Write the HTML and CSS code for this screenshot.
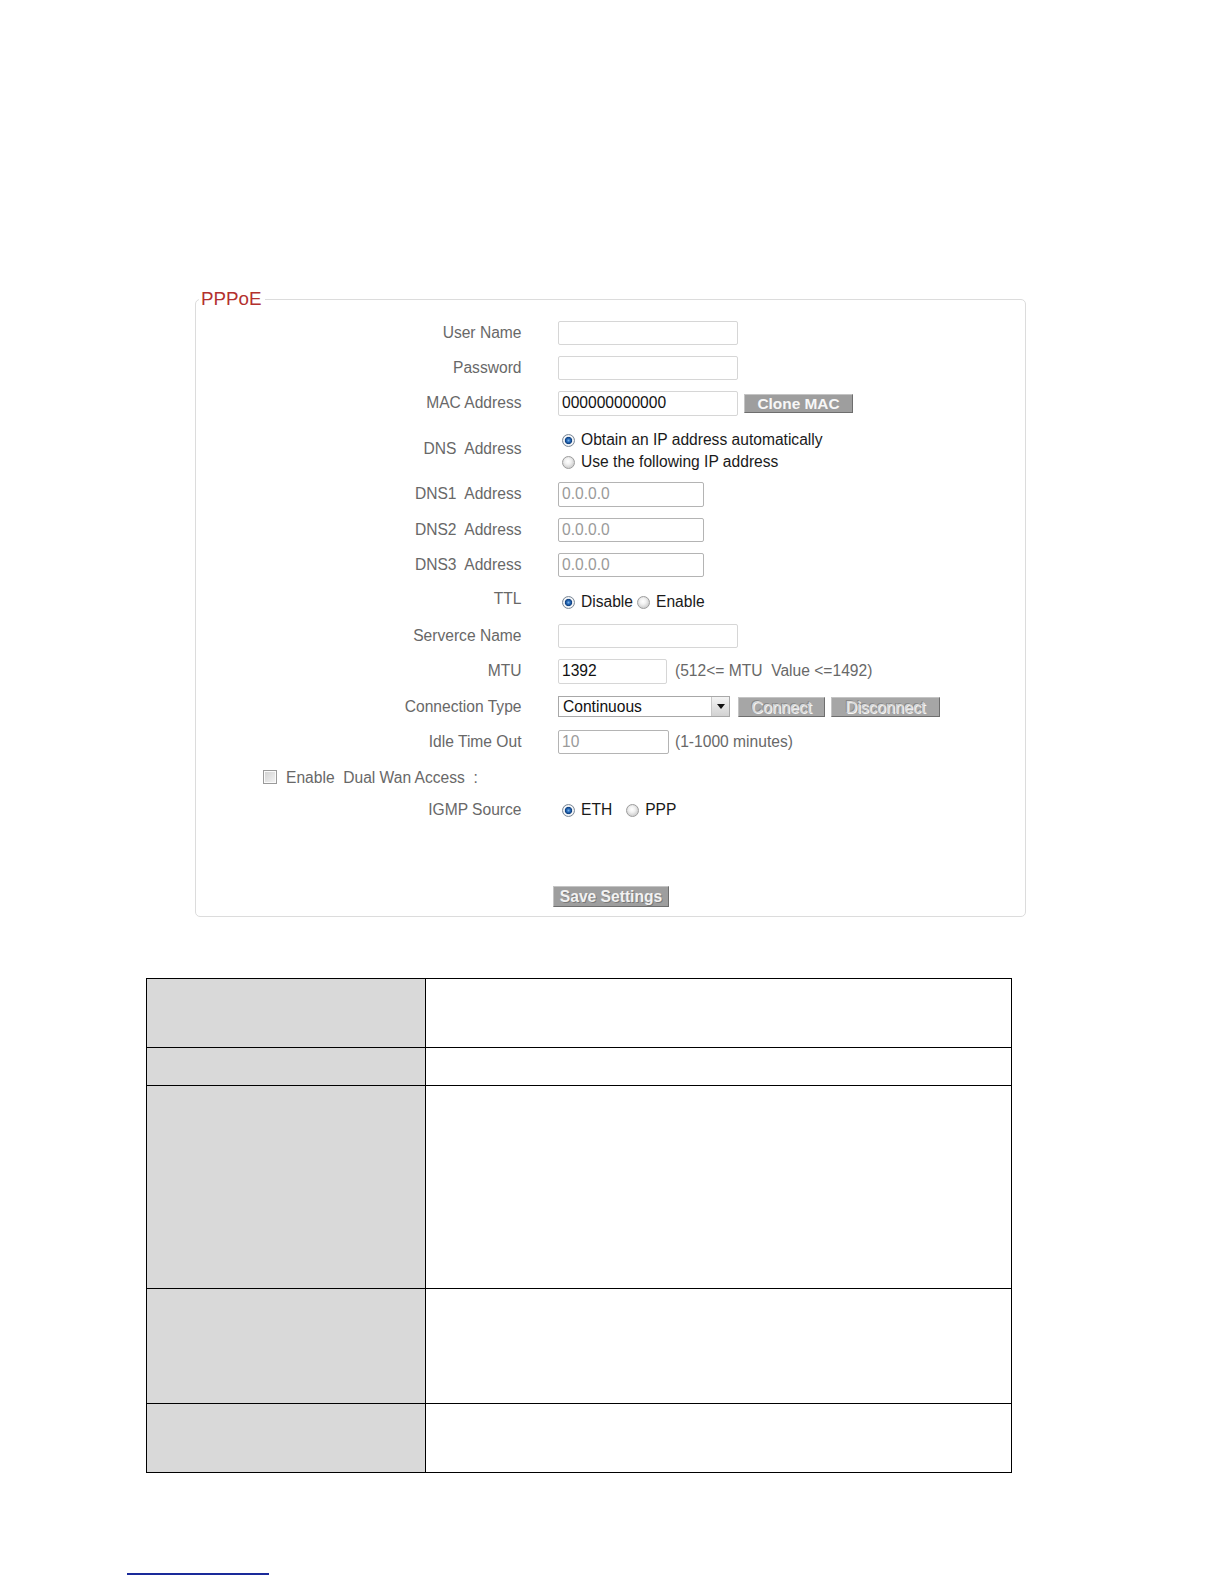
FILE: index.html
```html
<!DOCTYPE html>
<html>
<head>
<meta charset="utf-8">
<title>PPPoE</title>
<link rel="stylesheet" href="styles.css">
</head>
<body>
<div class="page">
  <div class="panel">
    <span class="legend">PPPoE</span>
    <div class="rows">
      <div class="row"><span class="label">User Name</span><div class="ctl"><input class="field w-lg" type="text" value=""></div></div>
      <div class="row"><span class="label">Password</span><div class="ctl"><input class="field w-lg" type="password" value=""></div></div>
      <div class="row"><span class="label">MAC Address</span><div class="ctl"><input class="field w-lg" type="text" value="000000000000"><button class="btn btn-clone" type="button">Clone MAC</button></div></div>
      <div class="row row-dns"><span class="label">DNS&nbsp; Address</span>
        <div class="ctl ctl-stack">
          <label class="opt"><span class="radio on"></span><span class="opt-text">Obtain an IP address automatically</span></label>
          <label class="opt"><span class="radio"></span><span class="opt-text">Use the following IP address</span></label>
        </div>
      </div>
      <div class="row"><span class="label">DNS1&nbsp; Address</span><div class="ctl"><input class="field field-off w-md" type="text" value="0.0.0.0" disabled></div></div>
      <div class="row"><span class="label">DNS2&nbsp; Address</span><div class="ctl"><input class="field field-off w-md" type="text" value="0.0.0.0" disabled></div></div>
      <div class="row"><span class="label">DNS3&nbsp; Address</span><div class="ctl"><input class="field field-off w-md" type="text" value="0.0.0.0" disabled></div></div>
      <div class="row"><span class="label label-ttl">TTL</span>
        <div class="ctl ctl-ttl">
          <label class="opt"><span class="radio on"></span><span class="opt-text">Disable</span></label>
          <label class="opt opt-tight"><span class="radio"></span><span class="opt-text">Enable</span></label>
        </div>
      </div>
      <div class="row"><span class="label">Serverce Name</span><div class="ctl"><input class="field w-lg" type="text" value=""></div></div>
      <div class="row"><span class="label">MTU</span><div class="ctl"><input class="field w-mtu" type="text" value="1392"><span class="hint hint-mtu">(512&lt;= MTU&nbsp; Value &lt;=1492)</span></div></div>
      <div class="row"><span class="label">Connection Type</span>
        <div class="ctl">
          <div class="select"><span class="select-text">Continuous</span><span class="select-arrow"><span class="tri"></span></span></div>
          <button class="btn btn-off btn-connect" type="button" disabled>Connect</button>
          <button class="btn btn-off btn-disconnect" type="button" disabled>Disconnect</button>
        </div>
      </div>
      <div class="row"><span class="label">Idle Time Out</span><div class="ctl"><input class="field field-off w-idle" type="text" value="10" disabled><span class="hint hint-idle">(1-1000 minutes)</span></div></div>
      <div class="row-dual"><span class="checkbox"></span><span class="dual-text">Enable&nbsp; Dual Wan Access&nbsp; :</span></div>
      <div class="row row-igmp"><span class="label">IGMP Source</span>
        <div class="ctl">
          <label class="opt"><span class="radio on"></span><span class="opt-text">ETH</span></label>
          <label class="opt opt-ppp"><span class="radio"></span><span class="opt-text">PPP</span></label>
        </div>
      </div>
    </div>
    <div class="save-row"><button class="btn btn-save" type="button">Save Settings</button></div>
  </div>

  <table class="desc">
    <tr class="r1"><td class="k"></td><td class="v"></td></tr>
    <tr class="r2"><td class="k"></td><td class="v"></td></tr>
    <tr class="r3"><td class="k"></td><td class="v"></td></tr>
    <tr class="r4"><td class="k"></td><td class="v"></td></tr>
    <tr class="r5"><td class="k"></td><td class="v"></td></tr>
  </table>

  <div class="footline"></div>
</div>
</body>
</html>
```

FILE: styles.css
```css
* { box-sizing: border-box; }

html, body {
  margin: 0;
  padding: 0;
  background: #ffffff;
}

body {
  font-family: "Liberation Sans", Arial, sans-serif;
  font-size: 15.6px;
  color: #222;
}

.page {
  padding-top: 299px;
}

/* ---------- PPPoE panel ---------- */
.panel {
  position: relative;
  margin-left: 195px;
  width: 831px;
  border: 1px solid #dcdcdc;
  border-radius: 5px;
  padding: 15px 0 9px 0;
}

.legend {
  position: absolute;
  top: -12px;
  left: 3px;
  padding: 0 3px 0 2px;
  background: #fff;
  color: #b3302e;
  font-size: 18.8px;
  line-height: 22px;
}

.rows {
  display: flex;
  flex-direction: column;
}

.row {
  display: grid;
  grid-template-columns: 325.5px 1fr;
  column-gap: 36.5px;
  align-items: center;
  height: 35.4px;
}

.row-dns { height: 55.6px; }
.row-igmp { height: 30.3px; }

.label {
  text-align: right;
  color: #686868;
  white-space: nowrap;
}

.label-ttl { position: relative; top: -2px; }

.ctl {
  display: flex;
  align-items: center;
}

.ctl-stack {
  flex-direction: column;
  align-items: flex-start;
  gap: 4px;
  padding-top: 5px;
}

/* ---------- inputs ---------- */
.field {
  height: 24.3px;
  border: 1px solid #d6d6d6;
  border-radius: 2px;
  padding: 0 3px;
  font-family: "Liberation Sans", Arial, sans-serif;
  font-size: 15.6px;
  color: #111;
  background: #fff;
  outline: none;
}

.field-off {
  border-color: #b4b4b4;
  color: #9a9a9a;
  background: #fff;
}

.w-lg { width: 180px; }
.w-md { width: 145.5px; }
.w-mtu { width: 109px; }
.w-idle { width: 111px; }

.hint {
  color: #686868;
  white-space: nowrap;
}
.hint-mtu { margin-left: 8px; }
.hint-idle { margin-left: 6px; }

/* ---------- buttons ---------- */
.btn {
  font-family: "Liberation Sans", Arial, sans-serif;
  padding: 0;
  border: 1px solid;
  border-color: #c4c4c4 #6e6e6e #6e6e6e #c4c4c4;
  background: #9e9e9e;
  cursor: default;
}

.btn-clone {
  margin-left: 6px;
  width: 109px;
  height: 19.2px;
  font-size: 15.4px;
  font-weight: bold;
  color: #f7f7f7;
  line-height: 17px;
}

.btn-off {
  height: 20.2px;
  font-size: 16.2px;
  line-height: 18px;
  background: #a6a6a6;
  color: #d9d9d9;
  text-shadow: 1px 1px 0 #f4f4f4, -1px -1px 0 #8a8a8a;
}

.btn-connect { margin-left: 8px; width: 87px; }
.btn-disconnect { margin-left: 6px; width: 109px; }

.btn-save {
  width: 116px;
  height: 21.2px;
  font-size: 15.6px;
  font-weight: bold;
  color: #f2f2f2;
  line-height: 19px;
  text-shadow: 1px 1px 0 #7a7a7a;
}

.save-row {
  padding-left: 357px;
  margin-top: 60.6px;
  display: flex;
}

/* ---------- select ---------- */
.select {
  width: 172px;
  height: 21.2px;
  border: 1px solid #a8a8a8;
  display: flex;
  align-items: center;
  justify-content: space-between;
  background: #fff;
}

.select-text {
  padding-left: 4px;
  color: #111;
}

.select-arrow {
  width: 18px;
  height: 19px;
  border-left: 1px solid #c8c8c8;
  background: linear-gradient(#f4f4f4, #d2d2d2);
  display: flex;
  align-items: center;
  justify-content: center;
}

.tri {
  width: 0;
  height: 0;
  border-left: 4px solid transparent;
  border-right: 4px solid transparent;
  border-top: 5px solid #111;
}

/* ---------- radios / checkbox ---------- */
.opt {
  display: inline-flex;
  align-items: center;
  white-space: nowrap;
}

.opt-text { color: #1a1a1a; margin-left: 6px; }

.opt-tight { margin-left: 4px; }
.opt-ppp { margin-left: 14px; }

.ctl-ttl { padding-top: 3px; padding-left: 4px; }
.row-igmp .ctl { padding-left: 4px; }
.ctl-stack { padding-left: 4px; }

.radio {
  width: 13px;
  height: 13px;
  border-radius: 50%;
  border: 1px solid #9c9c9c;
  background: radial-gradient(circle at 45% 40%, #ffffff 0, #f1f1f1 3px, #d4d4d4 6px);
  flex: none;
}

.radio.on {
  border-color: #7d8a99;
  background: radial-gradient(circle at 50% 50%, #7fb3e6 0, #2a6fbf 1.6px, #0f3f7e 3.3px, #dfe6ee 4px, #ffffff 4.6px, #cfd3d8 6px);
}

.row-dual {
  height: 35.4px;
  display: flex;
  align-items: center;
  padding-left: 67px;
}

.checkbox {
  width: 14px;
  height: 14px;
  border: 1px solid #9a9a9a;
  background: linear-gradient(135deg, #d0d0d0, #f4f4f4);
  box-shadow: inset 0 0 0 1px #fafafa;
  margin-top: -2px;
}

.dual-text {
  color: #686868;
  margin-left: 9px;
  white-space: nowrap;
}

/* ---------- table ---------- */
.desc {
  margin-top: 60.5px;
  margin-left: 146px;
  width: 866px;
  border-collapse: collapse;
  table-layout: fixed;
}

.desc td {
  border: 1.5px solid #000;
  padding: 0;
}

.desc .k {
  width: 279px;
  background: #d9d9d9;
}

.desc .v { background: #fff; }

.desc .r1 td { height: 69.3px; }
.desc .r2 td { height: 38px; }
.desc .r3 td { height: 203px; }
.desc .r4 td { height: 115.2px; }
.desc .r5 td { height: 68.7px; }

.footline {
  margin-top: 100px;
  margin-left: 127px;
  width: 142px;
  height: 2px;
  background: #1a2a9a;
}
```
